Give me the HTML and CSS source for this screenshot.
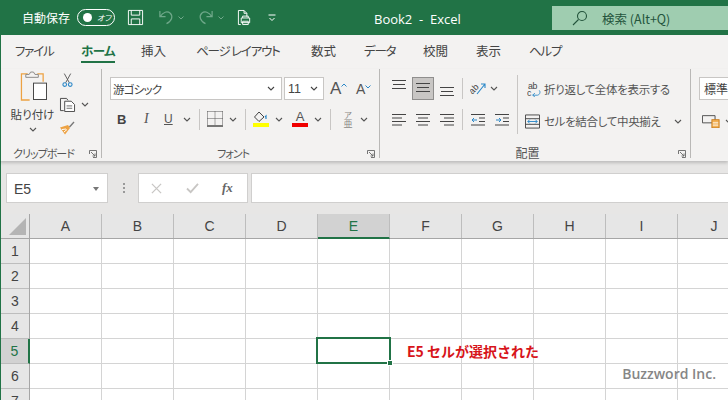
FILE: index.html
```html
<!DOCTYPE html>
<html lang="ja">
<head>
<meta charset="utf-8">
<title>Book2 - Excel</title>
<link rel="stylesheet" href="styles.css">
</head>
<body>
<div class="app">
  <header class="titlebar">
    <div class="qat">
      <span class="autosave">自動保存</span>
      <span class="toggle"><i class="knob"></i><span class="toggle-text">オフ</span></span>
      <svg class="ic save" viewBox="0 0 18 18"><path d="M1.500 1.500h15v15h-15zM4.500 1.500v5h9v-5M4.500 16.500v-6h9v6" fill="none" stroke="#fff" stroke-width="1"/></svg>
      <svg class="ic undo" viewBox="0 0 18 18"><path d="M2 2v6h6M2.500 8C5 3 10 2 13 4.500c3 3 2 8-4 11" fill="none" stroke="#6fa88a" stroke-width="1.300"/></svg>
      <svg class="chev-s" viewBox="0 0 6 4"><path d="M.5.500 3 3 5.500.500" fill="none" stroke="#6fa88a"/></svg>
      <svg class="ic redo" viewBox="0 0 18 18"><path d="M16 2v6h-6M15.500 8C13 3 8 2 5 4.500c-3 3-2 8 4 11" fill="none" stroke="#6fa88a" stroke-width="1.300"/></svg>
      <svg class="chev-s chev-s2" viewBox="0 0 6 4"><path d="M.5.500 3 3 5.500.500" fill="none" stroke="#6fa88a"/></svg>
      <svg class="ic print" viewBox="0 0 16 18"><path d="M1.500 16.500V1.500h6l3 3V8M7.500 1.500v3h3M1.500 16.500H4M4.500 9.500h9v5h-9zM6 9.500V7.500h6v2M6 13h6v3.500H6z" fill="none" stroke="#fff" stroke-width="1"/></svg>
      <svg class="more" viewBox="0 0 8 8"><path d="M.5 1h7M1.500 4 4 6.500 6.500 4" fill="none" stroke="#fff"/></svg>
    </div>
    <div class="doc">Book2&nbsp; -&nbsp; Excel</div>
    <div class="search">
      <svg class="search-ic" viewBox="0 0 16 16"><circle cx="10" cy="6" r="4.500" fill="none" stroke="#24543c" stroke-width="1.100"/><path d="M6.500 9.500 1 15" stroke="#24543c" stroke-width="1.100"/></svg>
      <span>検索 (Alt+Q)</span>
    </div>
  </header>

  <nav class="tabs">
    <span class="tab t1 kana">ファイル</span>
    <span class="tab t2 active">ホーム</span>
    <span class="tab t3">挿入</span>
    <span class="tab t4 kana">ページ レイアウト</span>
    <span class="tab t5">数式</span>
    <span class="tab t6 kana">データ</span>
    <span class="tab t7">校閲</span>
    <span class="tab t8">表示</span>
    <span class="tab t9 kana">ヘルプ</span>
  </nav>

  <section class="ribbon">
    <div class="group g-clip">
      <div class="clip-body">
        <div class="paste">
          <svg class="paste-ic" viewBox="0 0 28 32"><path d="M8 3H1.500v27H10" fill="none" stroke="#eda243" stroke-width="1.300"/><path d="M18 3h6v8" fill="none" stroke="#eda243" stroke-width="1.300"/><path d="M6 6.500V3.500h3.500L11 1h3l1.500 2.500H19v3z" fill="#f3f2f1" stroke="#8a8886"/><rect x="14" y="12.500" width="13.500" height="17" fill="#fff" stroke="#444"/></svg>
          <span class="paste-label">貼り付け</span>
          <svg class="chev" viewBox="0 0 8 5"><path d="M1 1l3 3 3-3" fill="none" stroke="#555" stroke-width="1.100"/></svg>
        </div>
        <div class="clip-tools">
          <svg class="cut" viewBox="0 0 12 16"><path d="M2.500 1 8 11M9.500 1 4 11" stroke="#555" fill="none"/><circle cx="3" cy="13" r="2" fill="none" stroke="#2b88c8" stroke-width="1.200"/><circle cx="9" cy="13" r="2" fill="none" stroke="#2b88c8" stroke-width="1.200"/></svg>
          <div class="copy-row">
            <svg class="copy" viewBox="0 0 18 16"><path d="M5 14.500H1.500v-13H8l1.500 2" fill="none" stroke="#444"/><path d="M6 4.500h7l3.500 3.500v7.500H6z" fill="#fff" stroke="#444"/><path d="M8 9.500h6M8 12h6" stroke="#666"/></svg>
            <svg class="chev" viewBox="0 0 8 5"><path d="M1 1l3 3 3-3" fill="none" stroke="#555" stroke-width="1.100"/></svg>
          </div>
          <svg class="brush" viewBox="0 0 16 16"><path d="M9 5 1 7.500 6 14.500 11 8z" fill="#eda243"/><path d="M3 9.500 7 9M5 12 8 9.500" stroke="#fff"/><path d="M10 6.500 14.500 1.500l1 1L11 7.500z" fill="#777"/></svg>
        </div>
      </div>
      <div class="group-label">クリップボード<svg class="launcher" viewBox="0 0 8 8"><path d="M.5 4V.5H7.500V7.500H4M2 2l4 4M6 3.500V6H3.500" fill="none" stroke="#666" stroke-width=".9"/></svg></div>
    </div>

    <div class="group g-font">
      <div class="font-body">
        <div class="row">
          <div class="select font-name"><span>游ゴシック</span><svg class="chev" viewBox="0 0 8 5"><path d="M1 1l3 3 3-3" fill="none" stroke="#444" stroke-width="1.100"/></svg></div>
          <div class="select font-size"><span>11</span><svg class="chev" viewBox="0 0 8 5"><path d="M1 1l3 3 3-3" fill="none" stroke="#444" stroke-width="1.100"/></svg></div>
          <span class="grow-a big">A<svg viewBox="0 0 6 4"><path d="M.5 3.500 3 1l2.500 2.500" fill="none" stroke="#2b88c8"/></svg></span>
          <span class="grow-a small">A<svg viewBox="0 0 6 4"><path d="M.5.500 3 3 5.500.500" fill="none" stroke="#2b88c8"/></svg></span>
        </div>
        <div class="row fmt">
          <b class="f-b">B</b>
          <i class="f-i">I</i>
          <span class="f-u">U</span>
          <svg class="chev" viewBox="0 0 8 5"><path d="M1 1l3 3 3-3" fill="none" stroke="#555" stroke-width="1.100"/></svg>
          <span class="sep"></span>
          <svg class="borders" viewBox="0 0 16 16"><path d="M.5.500h15M.500.500v14M15.500.500v14M8 .500v14M.500 7.500h15" fill="none" stroke="#555" stroke-dasharray="1 1"/><path d="M0 15h16" stroke="#222" stroke-width="1.200"/></svg>
          <svg class="chev" viewBox="0 0 8 5"><path d="M1 1l3 3 3-3" fill="none" stroke="#555" stroke-width="1.100"/></svg>
          <span class="sep"></span>
          <svg class="fill" viewBox="0 0 16 16"><path d="M6 1 1.500 6 6 10.500 11 6z" fill="none" stroke="#444"/><path d="M13 8V5l-1 1" fill="none" stroke="#2b88c8" stroke-width="1.200"/><rect y="12" width="16" height="4" fill="#ffff00"/></svg>
          <svg class="chev after-fill" viewBox="0 0 8 5"><path d="M1 1l3 3 3-3" fill="none" stroke="#555" stroke-width="1.100"/></svg>
          <span class="font-color"><span class="fc-a">A</span></span>
          <svg class="chev" viewBox="0 0 8 5"><path d="M1 1l3 3 3-3" fill="none" stroke="#555" stroke-width="1.100"/></svg>
          <span class="sep"></span>
          <span class="phonetic"><small>ア</small>亜</span>
          <svg class="chev" viewBox="0 0 8 5"><path d="M1 1l3 3 3-3" fill="none" stroke="#555" stroke-width="1.100"/></svg>
        </div>
      </div>
      <div class="group-label">フォント<svg class="launcher" viewBox="0 0 8 8"><path d="M.5 4V.5H7.500V7.500H4M2 2l4 4M6 3.500V6H3.500" fill="none" stroke="#666" stroke-width=".9"/></svg></div>
    </div>

    <div class="group g-align">
      <div class="align-body">
        <div class="align-left">
          <div class="row a-row">
            <svg class="al-t" viewBox="0 0 14 18"><path d="M0 .500h14M1 4.500h12M0 8.500h14" stroke="#444"/></svg>
            <span class="al-on"><svg class="al-t" viewBox="0 0 14 18"><path d="M0 3.500h14M1 7.500h12M0 11.500h14" stroke="#444"/></svg></span>
            <svg class="al-t" viewBox="0 0 14 18"><path d="M0 7.500h14M1 11.500h12M0 15.500h14" stroke="#444"/></svg>
            <span class="sep"></span>
            <svg class="orient" viewBox="0 0 16 14"><text x="-1" y="9" font-size="9" transform="rotate(-45 5 7)" fill="#444" font-family="Liberation Sans">ab</text><path d="M7 12 15 2M11 2h4v4" fill="none" stroke="#2b88c8" stroke-width="1.100"/></svg>
            <svg class="chev" viewBox="0 0 8 5"><path d="M1 1l3 3 3-3" fill="none" stroke="#555" stroke-width="1.100"/></svg>
          </div>
          <div class="row a-row a-row2">
            <svg class="al" viewBox="0 0 14 12"><path d="M0 .500h14M0 4h10M0 7.500h14M0 11h10" stroke="#444"/></svg>
            <svg class="al" viewBox="0 0 14 12"><path d="M0 .500h14M2 4h10M0 7.500h14M2 11h10" stroke="#444"/></svg>
            <svg class="al" viewBox="0 0 14 12"><path d="M0 .500h14M4 4h10M0 7.500h14M4 11h10" stroke="#444"/></svg>
            <span class="sep"></span>
            <svg class="al" viewBox="0 0 14 12"><path d="M0 .500h14M8 4h6M8 7.500h6M0 11h14" stroke="#444"/><path d="M6 6H1M3 4 1 6l2 2" fill="none" stroke="#2b88c8"/></svg>
            <svg class="al" viewBox="0 0 14 12"><path d="M0 .500h14M8 4h6M8 7.500h6M0 11h14" stroke="#444"/><path d="M1 6h5M4 4l2 2-2 2" fill="none" stroke="#2b88c8"/></svg>
          </div>
        </div>
        <span class="tall"></span>
        <div class="align-right">
          <div class="wm"><svg class="wrap-ic" viewBox="0 0 16 16"><text x="1" y="7.500" font-size="10" fill="#444" font-family="Liberation Sans">ab</text><text x="0" y="15.500" font-size="10" fill="#444" font-family="Liberation Sans">c</text><path d="M14 9c2 2 0 5.500-2 5.500H6.500M9 12l-2.500 2.500L9 16.500" fill="none" stroke="#2b88c8"/></svg><span>折り返して全体を表示する</span></div>
          <div class="wm"><svg class="merge-ic" viewBox="0 0 16 15"><path d="M.5.500h15v14H.500z" fill="none" stroke="#444"/><path d="M.500 4.500h15M.500 10.500h15" stroke="#444"/><path d="M3 7.500h10M5 5.500l-2 2 2 2M11 5.500l2 2-2 2" fill="none" stroke="#2b88c8"/></svg><span>セルを結合して中央揃え</span><svg class="chev" viewBox="0 0 8 5"><path d="M1 1l3 3 3-3" fill="none" stroke="#555" stroke-width="1.100"/></svg></div>
        </div>
      </div>
      <div class="group-label">配置<svg class="launcher" viewBox="0 0 8 8"><path d="M.5 4V.5H7.500V7.500H4M2 2l4 4M6 3.500V6H3.500" fill="none" stroke="#666" stroke-width=".9"/></svg></div>
    </div>

    <div class="group g-num">
      <div class="select num"><span>標準</span></div>
      <div class="num-row"><svg class="cur" viewBox="0 0 20 14"><path d="M.5.500h14v8H.500z" fill="none" stroke="#444"/><rect x="11" y="5" width="8" height="9" fill="#f3b256" stroke="#c97a17"/><path d="M12 8.500h6M12 11h6" stroke="#fff"/></svg><svg class="chev" viewBox="0 0 8 5"><path d="M1 1l3 3 3-3" fill="none" stroke="#555" stroke-width="1.100"/></svg></div>
    </div>
  </section>

  <section class="formula">
    <div class="namebox"><span>E5</span><i class="tri"></i></div>
    <span class="dots"></span>
    <div class="fx-box">
      <svg class="fx-x" viewBox="0 0 12 12"><path d="M1 1l10 10M11 1 1 11" stroke="#c8c6c4" stroke-width="1.400"/></svg>
      <svg class="fx-c" viewBox="0 0 14 12"><path d="M1 6l4 4 8-9" fill="none" stroke="#c8c6c4" stroke-width="2"/></svg>
      <span class="fx">fx</span>
    </div>
    <div class="fx-input"></div>
  </section>

  <section class="sheet">
    <div class="col-head">
      <div class="corner"><i></i></div>
      <div class="c">A</div><div class="c">B</div><div class="c">C</div><div class="c">D</div><div class="c sel">E</div><div class="c">F</div><div class="c">G</div><div class="c">H</div><div class="c">I</div><div class="c last">J</div>
    </div>
    <div class="sheet-body">
      <div class="rows">
        <div class="r">1</div><div class="r">2</div><div class="r">3</div><div class="r">4</div><div class="r sel">5</div><div class="r">6</div><div class="r">7</div>
      </div>
      <div class="grid">
        <div class="cursor"><i></i></div>
        <div class="note">E5 セルが選択された</div>
        <div class="credit">Buzzword Inc.</div>
      </div>
    </div>
  </section>
</div>
</body>
</html>
```
FILE: styles.css
```css
* { box-sizing: border-box; }
html, body { margin: 0; padding: 0; }
body { width: 728px; height: 400px; overflow: hidden; background: #fff; font-family: "Noto Sans CJK JP", "Liberation Sans", sans-serif; font-feature-settings: "palt"; color: #444; }
.app { width: 728px; height: 400px; overflow: hidden; display: flex; flex-direction: column; }
svg { display: block; flex: none; }

.titlebar { height: 35px; flex: none; background: #217346; display: flex; align-items: flex-start; color: #fff; }
.qat { display: flex; align-items: center; width: 374px; height: 35px; padding: 0 0 0 22px; }
.autosave { font-size: 12px; width: 55px; color: #fff; white-space: nowrap; }
.toggle { width: 38px; height: 17px; border: 1px solid #fff; border-radius: 9px; display: flex; align-items: center; padding-left: 5px; }
.knob { width: 9px; height: 9px; background: #fff; border-radius: 50%; }
.toggle-text { font-size: 8px; margin-left: 5px; font-style: italic; color: #fff; }
.ic { width: 17px; height: 17px; }
.save { margin-left: 12px; }
.undo { margin-left: 14px; }
.redo { margin-left: 13px; }
.chev-s { width: 6px; height: 4px; margin-left: 3px; }
.chev-s2 { margin-left: 4px; }
.print { margin-left: 13px; width: 15px; height: 17px; }
.more { width: 8px; height: 8px; margin-left: 16px; }
.doc { width: 178px; font-family: "Open Sans", "Liberation Sans", sans-serif; font-size: 13px; line-height: 38px; height: 35px; color: #fff; white-space: nowrap; }
.search { width: 176px; height: 24px; margin-top: 6px; background: #9fcdb0; color: #24543c; display: flex; align-items: center; font-size: 12.500px; padding-left: 20px; }
.search-ic { width: 16px; height: 16px; margin-right: 14px; }

.tabs { height: 34px; flex: none; background: #f3f2f1; display: flex; align-items: flex-start; border-left: 1px solid #217346; padding-left: 14px; font-size: 12.500px; color: #444; }
.tab { flex: none; line-height: 32px; height: 28px; white-space: nowrap; }
.kana { letter-spacing: -1.200px; }
.t1 { width: 66px; }
.t2 { width: 34px; margin-right: 26px; letter-spacing: -.5px; }
.t3 { width: 55px; }
.t4 { width: 115px; }
.t5 { width: 53px; }
.t6 { width: 59px; }
.t7 { width: 53px; }
.t8 { width: 53px; }
.active { font-weight: 700; color: #217346; border-bottom: 2px solid #217346; height: 28px; line-height: 32px; }

.ribbon { height: 92px; flex: none; background: #f3f2f1; display: flex; border-left: 1px solid #217346; box-shadow: 0 2px 3px rgba(0,0,0,.18); position: relative; z-index: 1; }
.group { border-right: 1px solid #b9b8b6; height: 89px; position: relative; flex: none; }
.group-label { position: absolute; left: 0; right: 0; bottom: -2px; padding-right: 15px; text-align: center; font-size: 11px; letter-spacing: -1px; line-height: 14px; color: #555; white-space: nowrap; }
.g-align .group-label { font-size: 12px; letter-spacing: 0; }
.launcher { position: absolute; right: 4px; bottom: 2px; width: 8px; height: 8px; }
.g-clip { width: 101px; }
.clip-body { display: flex; }
.paste { width: 57px; display: flex; flex-direction: column; align-items: center; padding-top: 2px; margin-left: 3px; }
.paste-ic { width: 27px; height: 31px; margin-left: 2px; }
.paste-label { font-size: 11.500px; line-height: 14px; margin-top: 5px; white-space: nowrap; color: #444; }
.chev { width: 8px; height: 5px; }
.paste .chev { margin-top: 6px; }
.clip-tools { display: flex; flex-direction: column; }
.cut { width: 11px; height: 16px; margin-top: 3px; margin-left: 1px; }
.copy-row { display: flex; align-items: center; margin-top: 9px; margin-left: -2px; }
.copy { width: 17px; height: 15px; }
.copy-row .chev { margin-left: 5px; }
.brush { width: 16px; height: 16px; margin-top: 8px; margin-left: -2px; }

.g-font { width: 278px; }
.font-body { padding: 8px 0 0 8px; }
.row { display: flex; align-items: center; }
.select { height: 23px; background: #fff; border: 1px solid #c8c6c4; display: flex; align-items: center; justify-content: space-between; font-size: 11px; color: #444; padding: 0 6px 0 2px; white-space: nowrap; }
.font-name { width: 172px; margin-right: 2px; font-size: 11.500px; letter-spacing: -.8px; }
.font-size { width: 40px; font-family: "Liberation Sans", sans-serif; font-size: 12.500px; padding-left: 3px; padding-right: 5px; margin-right: 6px; }
.grow-a { font-family: "Liberation Sans", sans-serif; color: #555; display: flex; line-height: 1; }
.grow-a svg { width: 6px; height: 4px; margin-top: 3px; }
.big { font-size: 17px; width: 26px; }
.small { font-size: 14px; align-items: flex-start; }
.fmt { margin-top: 8px; height: 22px; padding-left: 7px; }
.f-b { font-family: "Liberation Sans", sans-serif; font-size: 13px; width: 27px; color: #444; }
.f-i { font-family: "Liberation Serif", serif; font-size: 14px; width: 20px; color: #555; }
.f-u { font-family: "Liberation Sans", sans-serif; font-size: 12px; text-decoration: underline; width: 19px; color: #555; }
.sep { width: 1px; height: 21px; background: #c8c6c4; flex: none; margin: 0 7px 0 8px; }
.borders { width: 16px; height: 16px; margin-right: 6px; }
.fill { width: 16px; height: 16px; margin-right: 6px; }
.after-fill { margin-right: 9px; }
.font-color { width: 16px; height: 16px; border-bottom: 4px solid #f00000; margin-right: 6px; display: block; text-align: center; }
.fc-a { font-family: "Liberation Sans", sans-serif; font-size: 13px; line-height: 12px; display: block; color: #555; }
.phonetic { width: 14px; display: flex; flex-direction: column; align-items: center; font-size: 9px; line-height: 9px; margin: 0 5px 0 3px; color: #8a8886; }
.phonetic small { font-size: 8px; }

.g-align { width: 311px; }
.align-body { display: flex; padding: 8px 0 0 12px; }
.align-left { width: 125px; flex: none; }
.a-row { height: 23px; }
.al-t { width: 14px; height: 18px; }
.al { width: 14px; height: 12px; }
.al-on { width: 22px; height: 23px; margin: 0 6px; background: #c8c6c4; border: 1px solid #8f8e8d; display: flex; align-items: center; justify-content: center; flex: none; }
.a-row2 { margin-top: 8px; }
.a-row2 .al + .al { margin-left: 10px; }
.a-row2 .sep + .al { margin-left: 0; }
.a-row2 .sep { margin-right: 8px; }
.orient { width: 16px; height: 14px; margin-right: 4px; }
.tall { width: 1px; height: 59px; margin: -2px 7px 0 0; background: #c8c6c4; flex: none; }
.align-right { display: flex; flex-direction: column; }
.wm { display: flex; align-items: center; height: 24px; font-size: 11.500px; letter-spacing: -.33px; color: #555; white-space: nowrap; margin-bottom: 8px; }
.wrap-ic { width: 14px; height: 15px; margin: 0 3px 0 2px; }
.merge-ic { width: 15px; height: 15px; margin: 0 4px 0 0; }
.wm .chev { margin-left: 13px; }

.g-num { border-right: 0; padding: 8px 0 0 8px; flex: 1; min-width: 0; }
.num { width: 60px; font-size: 12px; padding-left: 4px; }
.num-row { display: flex; align-items: center; margin: 15px 0 0 3px; }
.cur { width: 18px; height: 13px; }
.num-row .chev { margin-left: 5px; }

.formula { height: 53px; flex: none; background: #e7e6e5; display: flex; align-items: flex-start; padding: 12px 0 0 5px; border-left: 1px solid #217346; }
.namebox { width: 102px; height: 30px; background: #fff; border: 1px solid #d0cfce; display: flex; align-items: center; justify-content: space-between; padding: 2px 8px 0 7px; font-family: "Liberation Sans", sans-serif; font-size: 14px; color: #444; flex: none; }
.tri { border-left: 3.500px solid transparent; border-right: 3.500px solid transparent; border-top: 4px solid #777; }
.dots { width: 2px; height: 10px; margin: 10px 13px 0 15px; background: repeating-linear-gradient(#999 0 2px, transparent 2px 4px); flex: none; }
.fx-box { width: 110px; height: 30px; background: #fff; border: 1px solid #d0cfce; display: flex; align-items: center; padding-left: 12px; flex: none; }
.fx-x { width: 11px; height: 11px; margin-right: 24px; }
.fx-c { width: 13px; height: 11px; margin-right: 23px; }
.fx { font-family: "Liberation Serif", serif; font-style: italic; font-weight: 700; font-size: 13px; color: #666; }
.fx-input { flex: 1; height: 30px; margin-left: 3px; background: #fff; border: 1px solid #d0cfce; border-right: 0; }

.sheet { flex: 1; min-height: 0; display: flex; flex-direction: column; font-family: "Liberation Sans", sans-serif; background: #fff; border-left: 1px solid #217346; }
.col-head { height: 25px; flex: none; display: flex; background: #e6e6e6; border-bottom: 1px solid #a6a6a6; }
.corner { width: 29px; flex: none; border-right: 1px solid #a6a6a6; position: relative; }
.corner i { position: absolute; right: 3px; bottom: 3px; width: 0; height: 0; border-left: 17px solid transparent; border-bottom: 17px solid #b4b4b4; }
.c { width: 72px; flex: none; text-align: center; font-size: 14px; line-height: 24px; color: #444; border-right: 1px solid #bdbdbd; }
.c.sel { background: #d2d2d2; border-bottom: 2px solid #217346; height: 25px; color: #217346; }
.c.last { border-right: 0; }
.sheet-body { flex: 1; display: flex; min-height: 0; }
.rows { width: 29px; flex: none; background: #e6e6e6; border-right: 1px solid #a6a6a6; }
.r { height: 25px; font-size: 14px; line-height: 24px; text-align: center; color: #444; border-bottom: 1px solid #bdbdbd; }
.r.sel { background: #d2d2d2; border-right: 2px solid #217346; margin-right: -1px; color: #217346; }
.grid { flex: 1; position: relative; overflow: hidden;
  background-image: linear-gradient(#d4d4d4 1px, transparent 1px), linear-gradient(90deg, #d4d4d4 1px, transparent 1px);
  background-size: 72px 25px; background-position: 71px 24px; }
.cursor { position: absolute; left: 286px; top: 98px; width: 75px; height: 27px; border: 2px solid #217346; }
.cursor i { position: absolute; right: -4px; bottom: -4px; background: #217346; border: 1px solid #fff; box-sizing: content-box; width: 4px; height: 4px; }
.note { position: absolute; left: 377px; top: 102px; font-family: "Noto Sans CJK JP", sans-serif; font-feature-settings: normal; font-weight: 700; font-size: 14px; line-height: 20px; color: #d7141a; white-space: nowrap; }
.credit { position: absolute; right: 12px; top: 126px; font-family: "Open Sans", "Liberation Sans", sans-serif; font-weight: 600; font-size: 14px; line-height: 18px; color: #868686; white-space: nowrap; }
```
